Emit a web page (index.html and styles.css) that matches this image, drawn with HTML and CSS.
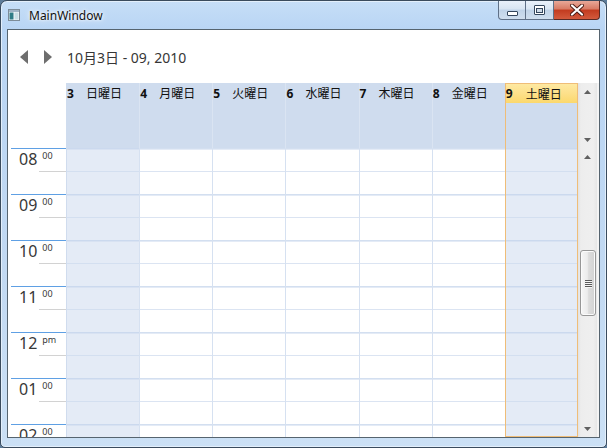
FILE: index.html
```html
<!DOCTYPE html>
<html>
<head>
<meta charset="utf-8">
<title>MainWindow</title>
<link rel="stylesheet" href="styles.css">
</head>
<body>
<div class="window">
  <div class="titlebar">
    <svg class="app-icon" width="12" height="12" viewBox="0 0 12 12">
      <rect x="0.5" y="0.5" width="11" height="11" fill="#f4f7fa" stroke="#7d8c99"/>
      <rect x="1" y="1" width="10" height="2" fill="#9fb3c5"/>
      <rect x="1.5" y="3.5" width="4" height="7" fill="#2f7c86"/>
      <rect x="6.5" y="3.5" width="4" height="7" fill="#c9dfe6"/>
    </svg>
    <span class="title">MainWindow</span>
    <div class="caption">
      <div class="cbtn cmin">
        <svg width="11" height="5" viewBox="0 0 11 5"><rect x="0.5" y="0.5" width="10" height="4" rx="0.5" fill="#fff" stroke="#34465c"/></svg>
      </div>
      <div class="cbtn cmax">
        <svg width="11" height="10" viewBox="0 0 11 10"><rect x="0.5" y="0.5" width="10" height="9" rx="0.5" fill="#fff" stroke="#34465c"/><rect x="2.5" y="3.5" width="6" height="4" fill="#cfdbe8" stroke="#34465c"/></svg>
      </div>
      <div class="cbtn cclose">
        <svg width="14" height="12" viewBox="0 0 14 12"><path d="M2 1.5 L12 10.5 M12 1.5 L2 10.5" stroke="#4a1a12" stroke-width="4" stroke-linecap="round"/><path d="M2 1.5 L12 10.5 M12 1.5 L2 10.5" stroke="#fff" stroke-width="2.2" stroke-linecap="round"/></svg>
      </div>
    </div>
  </div>

  <div class="client">
    <div class="nav">
      <svg class="arrow" width="8" height="14" viewBox="0 0 8 14"><polygon points="8,0 8,14 0,7" fill="#6e6e6e"/></svg>
      <svg class="arrow arrow-next" width="8" height="14" viewBox="0 0 8 14"><polygon points="0,0 0,14 8,7" fill="#6e6e6e"/></svg>
      <span class="range">10月3日 - 09, 2010</span>
    </div>

    <div class="sched">
      <div class="hrow">
        <div class="corner"></div>
        <div class="dayheads">
          <div class="dh"><div class="dh-top"><b class="num">3</b><span>日曜日</span></div></div>
          <div class="dh"><div class="dh-top"><b class="num">4</b><span>月曜日</span></div></div>
          <div class="dh"><div class="dh-top"><b class="num">5</b><span>火曜日</span></div></div>
          <div class="dh"><div class="dh-top"><b class="num">6</b><span>水曜日</span></div></div>
          <div class="dh"><div class="dh-top"><b class="num">7</b><span>木曜日</span></div></div>
          <div class="dh"><div class="dh-top"><b class="num">8</b><span>金曜日</span></div></div>
          <div class="dh today"><div class="dh-top"><b class="num">9</b><span>土曜日</span></div></div>
        </div>
        <div class="sbar">
          <div class="sbtn"><svg width="7" height="4" viewBox="0 0 7 4"><polygon points="0,4 7,4 3.5,0" fill="#606060"/></svg></div>
          <div class="strack"></div>
          <div class="sbtn"><svg width="7" height="4" viewBox="0 0 7 4"><polygon points="0,0 7,0 3.5,4" fill="#606060"/></svg></div>
        </div>
        <div class="gap"></div>
      </div>

      <div class="brow">
        <div class="times">
          <div class="hour"><div class="hl"><span class="h">08</span><span class="m">00</span></div><div class="half"></div></div>
          <div class="hour"><div class="hl"><span class="h">09</span><span class="m">00</span></div><div class="half"></div></div>
          <div class="hour"><div class="hl"><span class="h">10</span><span class="m">00</span></div><div class="half"></div></div>
          <div class="hour"><div class="hl"><span class="h">11</span><span class="m">00</span></div><div class="half"></div></div>
          <div class="hour"><div class="hl"><span class="h">12</span><span class="m">pm</span></div><div class="half"></div></div>
          <div class="hour"><div class="hl"><span class="h">01</span><span class="m">00</span></div><div class="half"></div></div>
          <div class="hour"><div class="hl"><span class="h">02</span><span class="m">00</span></div><div class="half"></div></div>
        </div>
        <div class="days">
          <div class="col weekend"></div>
          <div class="col"></div>
          <div class="col"></div>
          <div class="col"></div>
          <div class="col"></div>
          <div class="col"></div>
          <div class="col weekend today"></div>
        </div>
        <div class="sbar">
          <div class="sbtn"><svg width="7" height="4" viewBox="0 0 7 4"><polygon points="0,4 7,4 3.5,0" fill="#606060"/></svg></div>
          <div class="strack main">
            <div class="thumb">
              <div class="grip"><i></i><i></i><i></i><i></i></div>
            </div>
          </div>
          <div class="sbtn"><svg width="7" height="4" viewBox="0 0 7 4"><polygon points="0,0 7,0 3.5,4" fill="#606060"/></svg></div>
        </div>
        <div class="gap"></div>
      </div>
    </div>
  </div>
</div>
</body>
</html>
```

FILE: styles.css
```css
html, body {
  margin: 0;
  padding: 0;
}
body {
  width: 607px;
  height: 448px;
  overflow: hidden;
  background: #5d7c9a;
  font-family: "Noto Sans", "Noto Sans CJK JP", sans-serif;
}

.window {
  box-sizing: border-box;
  width: 607px;
  height: 448px;
  border: 1px solid #3a4b5d;
  border-radius: 7px 7px 5px 5px;
  background: linear-gradient(to bottom, #c6def7 0, #b9d5f4 28px, #c2d9f2 60%, #cbe0f5 100%);
  padding: 0 6px 9px 6px;
  display: flex;
  flex-direction: column;
  box-shadow: inset 0 0 0 1px #e3effb;
}

/* ---------- title bar ---------- */
.titlebar {
  height: 28px;
  display: flex;
  align-items: flex-start;
  flex: none;
}
.app-icon {
  margin: 8px 0 0 1px;
  flex: none;
}
.title {
  margin: 7px 0 0 9px;
  font-size: 12px;
  line-height: 16px;
  color: #111;
  text-shadow: 0 0 6px #ffffff, 0 0 3px #ffffff;
}
.caption {
  margin-left: auto;
  display: flex;
}
.cbtn {
  box-sizing: border-box;
  height: 19px;
  display: flex;
  align-items: center;
  justify-content: center;
  border: 1px solid #5f7087;
  border-top: none;
  background: linear-gradient(to bottom, #e9f1fa 0, #d8e5f2 45%, #c0d3e8 50%, #cfdeee 100%);
}
.cmin {
  width: 28px;
  border-radius: 0 0 0 4px;
}
.cmin svg {
  margin-top: 6px;
}
.cmax {
  width: 28px;
  border-left: none;
}
.cclose {
  width: 46px;
  border-left: none;
  border-color: #5a2a24;
  border-radius: 0 0 4px 0;
  background: linear-gradient(to bottom, #e8a898 0, #d77a64 45%, #c23b1f 50%, #d35a3d 100%);
}

/* ---------- client ---------- */
.client {
  flex: 1;
  border: 1px solid #56646f;
  background: #fff;
  display: flex;
  flex-direction: column;
  min-height: 0;
}

.nav {
  height: 53px;
  flex: none;
  display: flex;
  align-items: center;
  padding-left: 12px;
}
.arrow {
  flex: none;
}
.arrow-next {
  margin-left: 16px;
}
.range {
  margin-left: 15px;
  font-size: 14px;
  color: #363636;
  margin-top: 1px;
}

.sched {
  flex: 1;
  display: flex;
  flex-direction: column;
  min-height: 0;
}

.hrow {
  height: 65px;
  flex: none;
  display: flex;
}
.corner {
  width: 58px;
  flex: none;
}
.dayheads {
  flex: 1;
  display: grid;
  grid-template-columns: repeat(7, 1fr);
  background: #cfdcee;
}
.dh {
  border-left: 1px solid #dae4f2;
  min-width: 0;
}
.dh:first-child {
  border-left-color: #cfdcee;
}
.dh-top {
  height: 20px;
  display: flex;
  align-items: center;
  font-size: 12px;
  color: #111;
  white-space: nowrap;
}
.num {
  width: 19px;
  flex: none;
  font-weight: bold;
  font-family: "Noto Sans", sans-serif;
}
.dh.today {
  border: 1px solid #efbd78;
  border-bottom: none;
}
.dh.today .dh-top {
  height: 19px;
  background: linear-gradient(to bottom, #fee9a2 0, #fde08a 50%, #fbd86c 100%);
}
.dh.today .num {
  width: 20px;
}

.gap {
  width: 2px;
  flex: none;
  background: #f4f4f4;
}

.sbar {
  width: 19px;
  flex: none;
  display: flex;
  flex-direction: column;
  background: linear-gradient(to right, #e2e2e2 0, #ededed 15%, #efefef 80%, #e6e6e6 100%);
}
.sbtn {
  height: 17px;
  flex: none;
  display: flex;
  align-items: center;
  justify-content: center;
}
.strack {
  flex: 1;
  position: relative;
}

.thumb {
  position: absolute;
  left: 2px;
  top: 85px;
  width: 16px;
  height: 66px;
  box-sizing: border-box;
  border: 1px solid #979797;
  border-radius: 3px;
  background: linear-gradient(to right, #f6f6f6 0, #ececec 45%, #dcdcdc 55%, #d2d2d2 100%);
  box-shadow: inset 0 0 0 1px #fbfbfb;
  display: flex;
  align-items: center;
  justify-content: center;
}
.grip {
  display: flex;
  flex-direction: column;
  gap: 1px;
}
.grip i {
  display: block;
  width: 7px;
  height: 1px;
  background: #5a5a5a;
  box-shadow: 0 1px 0 #f4f4f4;
}

/* ---------- body ---------- */
.brow {
  flex: 1;
  display: flex;
  min-height: 0;
  overflow: hidden;
}
.times {
  width: 58px;
  flex: none;
  overflow: hidden;
}
.hour {
  box-sizing: border-box;
  height: 46px;
  margin-left: 3px;
  border-top: 1px solid #5fa0e4;
}
.hl {
  height: 22px;
  padding-left: 8px;
  display: flex;
  align-items: flex-start;
  color: #383838;
}
.h {
  font-size: 16px;
  line-height: 20px;
  margin-top: 0;
}
.m {
  font-size: 9px;
  line-height: 10px;
  margin-left: 5px;
  margin-top: 2px;
}
.half {
  height: 22px;
  margin-left: 28px;
  border-top: 1px solid #d2d2d2;
}

.days {
  flex: 1;
  display: grid;
  grid-template-columns: repeat(7, 1fr);
  overflow: hidden;
}
.col {
  min-width: 0;
  border-left: 1px solid #d6e1f1;
  background-color: #ffffff;
  background-image: repeating-linear-gradient(to bottom,
    #d3dff0 0, #d3dff0 1px,
    #e4ebf6 1px, #e4ebf6 2px,
    transparent 2px, transparent 23px,
    #dbe4f2 23px, #dbe4f2 24px,
    transparent 24px, transparent 46px);
}
.col.weekend {
  background-color: #e4ebf6;
  background-image: repeating-linear-gradient(to bottom,
    #cbd9ee 0, #cbd9ee 1px,
    #d8e2f2 1px, #d8e2f2 2px,
    transparent 2px, transparent 23px,
    #d3dff0 23px, #d3dff0 24px,
    transparent 24px, transparent 46px);
}
.col.weekend:first-child {
  border-left-color: #d0dcee;
}
.col.today {
  border: 1px solid #efbd78;
  border-top: none;
}
```
